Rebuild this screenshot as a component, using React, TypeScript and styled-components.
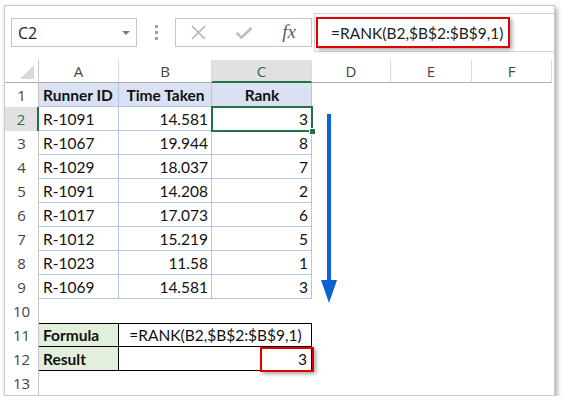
import React from "react";
import styled, { createGlobalStyle } from "styled-components";

const GlobalStyle = createGlobalStyle`
  body {
    margin: 0;
    background: #fff;
  }
`;

const COLS = [34, 80, 93, 100, 79, 81, 80];
const LETTERS = ["A", "B", "C", "D", "E", "F"];
const BLUE_LINE = "#b4c6e7";
const CELL_FONT = `"Lato", "Open Sans", sans-serif`;

const rows = [
  ["R-1091", "14.581", "3"],
  ["R-1067", "19.944", "8"],
  ["R-1029", "18.037", "7"],
  ["R-1091", "14.208", "2"],
  ["R-1017", "17.073", "6"],
  ["R-1012", "15.219", "5"],
  ["R-1023", "11.58", "1"],
  ["R-1069", "14.581", "3"],
];

const FORMULA = "=RANK(B2,$B$2:$B$9,1)";

const App = (): JSX.Element => {
  return (
    <>
      <GlobalStyle />
      <Window>
        <Toolbar>
          <NameBox>
            C2
            <DropArrow />
          </NameBox>
          <Dots>
            <i />
            <i />
            <i />
          </Dots>
          <FxBox>
            <svg width="15" height="15" viewBox="0 0 15 15">
              <path d="M1 1 L14 14 M14 1 L1 14" stroke="#b3b3b3" strokeWidth="1.6" fill="none" />
            </svg>
            <svg width="18" height="12" viewBox="0 0 18 12">
              <path d="M1.5 6 L6.5 10.5 L16.5 1" stroke="#bdbdbd" strokeWidth="2.6" fill="none" />
            </svg>
            <FxLabel>fx</FxLabel>
          </FxBox>
          <FormulaBar>
            <Highlight>{FORMULA}</Highlight>
          </FormulaBar>
        </Toolbar>

        <Sheet>
          <Corner />
          {LETTERS.map((l) => (
            <ColHead key={l} $active={l === "C"}>
              {l}
            </ColHead>
          ))}

          <RowHead>1</RowHead>
          <Cell $kind="head" $align="left">Runner ID</Cell>
          <Cell $kind="head" $align="center">Time Taken</Cell>
          <Cell $kind="head" $align="center">Rank</Cell>
          <Blank $span={3} />

          {rows.map((r, i) => (
            <React.Fragment key={i}>
              <RowHead $active={i === 0}>{i + 2}</RowHead>
              <Cell $kind="data" $align="left">{r[0]}</Cell>
              <Cell $kind="data" $align="right">{r[1]}</Cell>
              <Cell $kind="data" $align="right" $selected={i === 0}>
                {r[2]}
              </Cell>
              <Blank $span={3} />
            </React.Fragment>
          ))}

          <RowHead>10</RowHead>
          <Blank $span={6} />

          <RowHead>11</RowHead>
          <Cell $kind="label" $top>Formula</Cell>
          <Cell $kind="value" $align="center" $span={2} $top>
            {FORMULA}
          </Cell>
          <Blank $span={3} />

          <RowHead>12</RowHead>
          <Cell $kind="label">Result</Cell>
          <Cell $kind="value" $align="right" $span={2}>
            <ResultMark>3</ResultMark>
          </Cell>
          <Blank $span={3} />

          <RowHead>13</RowHead>
          <Blank $span={6} />

          <Arrow>
            <svg width="16" height="190" viewBox="0 0 16 190">
              <rect x="6" y="0" width="4" height="168" fill="#0b63d3" />
              <path d="M0 166 L16 166 L8 189 Z" fill="#0b63d3" />
            </svg>
          </Arrow>
        </Sheet>
      </Window>
    </>
  );
};

const Window = styled.div`
  margin: 5px 0 0 4px;
  width: 549px;
  border: 1px solid #c9c9c9;
  background: #fff;
  box-shadow: 2px 3px 5px rgba(0, 0, 0, 0.35);
  font-family: "Open Sans", "Liberation Sans", sans-serif;
  color: #111;
`;

const Toolbar = styled.div`
  display: flex;
  align-items: flex-start;
  height: 54px;
  padding: 12px 0 0 6px;
  box-sizing: border-box;
`;

const NameBox = styled.div`
  display: flex;
  align-items: center;
  justify-content: space-between;
  width: 126px;
  height: 29px;
  box-sizing: border-box;
  border: 1px solid #c6c6c6;
  padding: 0 6px 0 6px;
  font-size: 16px;
  color: #222;
`;

const DropArrow = styled.span`
  width: 0;
  height: 0;
  border-left: 4px solid transparent;
  border-right: 4px solid transparent;
  border-top: 4px solid #7a7a7a;
`;

const Dots = styled.div`
  display: flex;
  flex-direction: column;
  gap: 3px;
  margin: 7px 0 0 18px;

  i {
    display: block;
    width: 3px;
    height: 3px;
    background: #a2a2a2;
  }
`;

const FxBox = styled.div`
  display: flex;
  align-items: center;
  justify-content: space-between;
  width: 137px;
  height: 29px;
  box-sizing: border-box;
  margin-left: 17px;
  border: 1px solid #c6c6c6;
  padding: 0 15px 0 15px;
`;

const FxLabel = styled.span`
  font-family: "Liberation Serif", serif;
  font-style: italic;
  font-size: 19px;
  color: #5a5a5a;
  margin-top: -2px;
`;

const FormulaBar = styled.div`
  flex: 1;
  display: flex;
  align-items: center;
  height: 39px;
  margin: -5px 0 0 2px;
  border: 1px solid #d4d4d4;
  border-right: none;
  box-sizing: border-box;
`;

const Highlight = styled.span`
  display: flex;
  align-items: center;
  height: 31px;
  box-sizing: border-box;
  margin-left: 1px;
  padding: 0 5px 0 13px;
  border: 2px solid #e30000;
  box-shadow: 2px 2px 4px rgba(0, 0, 0, 0.35);
  font-family: ${CELL_FONT};
  font-size: 15.5px;
  color: #222;
  white-space: nowrap;
`;

const Sheet = styled.div`
  position: relative;
  display: grid;
  grid-template-columns: ${COLS.map((c) => `${c}px`).join(" ")};
  grid-template-rows: 23px repeat(13, 24px);
  font-size: 15.5px;
`;

const Corner = styled.div`
  display: flex;
  align-items: flex-end;
  justify-content: flex-end;
  padding: 0 4px 3px 0;
  border-right: 1px solid #c6c6c6;
  border-bottom: 1px solid #ababab;

  &::after {
    content: "";
    width: 0;
    height: 0;
    border-left: 14px solid transparent;
    border-bottom: 14px solid #d9d9d9;
  }
`;

const ColHead = styled.div<{ $active?: boolean }>`
  display: flex;
  align-items: center;
  justify-content: center;
  font-size: 15px;
  color: ${(p) => (p.$active ? "#217346" : "#444")};
  background: ${(p) => (p.$active ? "#e1e1e1" : "#fff")};
  border-right: 1px solid #dadada;
  border-bottom: ${(p) => (p.$active ? "2px solid #217346" : "1px solid #ababab")};
`;

const RowHead = styled.div<{ $active?: boolean }>`
  display: flex;
  align-items: center;
  justify-content: center;
  font-size: 15px;
  color: ${(p) => (p.$active ? "#217346" : "#444")};
  background: ${(p) => (p.$active ? "#e1e1e1" : "#fff")};
  border-right: ${(p) => (p.$active ? "2px solid #217346" : "1px solid #c6c6c6")};
`;

type Kind = "head" | "data" | "label" | "value";

const lineColor = (k: Kind) => (k === "head" || k === "data" ? BLUE_LINE : "#000");

const Cell = styled.div<{
  $kind: Kind;
  $align?: "left" | "center" | "right";
  $span?: number;
  $top?: boolean;
  $selected?: boolean;
}>`
  position: relative;
  display: flex;
  align-items: center;
  justify-content: ${(p) =>
    p.$align === "right" ? "flex-end" : p.$align === "center" ? "center" : "flex-start"};
  grid-column: span ${(p) => p.$span ?? 1};
  padding: 0 4px;
  white-space: nowrap;
  font-family: ${CELL_FONT};
  font-weight: ${(p) => (p.$kind === "head" || p.$kind === "label" ? 700 : 400)};
  background: ${(p) =>
    p.$kind === "head" ? "#d9e1f2" : p.$kind === "label" ? "#e2efda" : "#fff"};
  box-shadow: inset -1px -1px 0 ${(p) => lineColor(p.$kind)}
    ${(p) => (p.$top ? `, inset 0 1px 0 ${lineColor(p.$kind)}` : "")};

  ${(p) =>
    p.$selected &&
    `
    z-index: 2;
    box-shadow: 0 0 0 1px #217346, inset 0 0 0 1px #217346;
    &::after {
      content: "";
      position: absolute;
      right: -4px;
      bottom: -4px;
      width: 5px;
      height: 5px;
      background: #217346;
      border: 1px solid #fff;
    }
  `}
`;

const Blank = styled.div<{ $span: number }>`
  grid-column: span ${(p) => p.$span};
`;

const ResultMark = styled.span`
  display: flex;
  align-items: center;
  justify-content: flex-end;
  width: 54px;
  height: 25px;
  box-sizing: border-box;
  margin-right: -6px;
  padding-right: 5px;
  border: 2px solid #e30000;
  box-shadow: 2px 2px 4px rgba(0, 0, 0, 0.35);
`;

const Arrow = styled.div`
  position: absolute;
  left: 316px;
  top: 54px;
  line-height: 0;
`;

export default App;
